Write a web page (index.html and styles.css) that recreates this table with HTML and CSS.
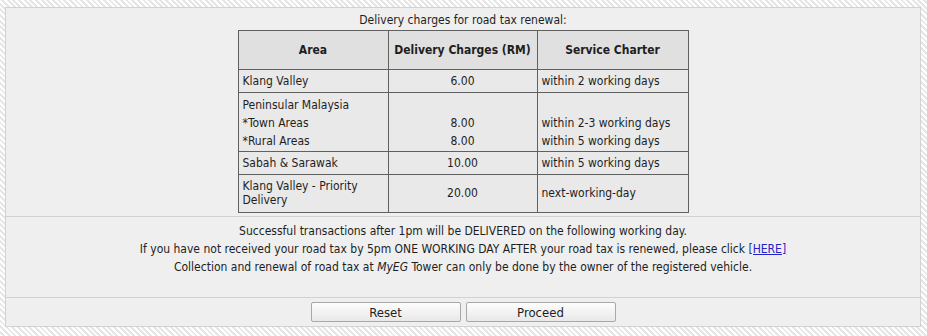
FILE: index.html
```html
<!DOCTYPE html>
<html>
<head>
<meta charset="utf-8">
<link rel="stylesheet" href="styles.css">
</head>
<body>
<div class="panel">
  <div class="charges">
    <div class="caption">Delivery charges for road tax renewal:</div>
    <table class="rates">
      <thead>
        <tr>
          <th class="c-area">Area</th>
          <th class="c-fee">Delivery Charges (RM)</th>
          <th class="c-sla">Service Charter</th>
        </tr>
      </thead>
      <tbody>
        <tr>
          <td>Klang Valley</td>
          <td class="num">6.00</td>
          <td>within 2 working days</td>
        </tr>
        <tr class="multi">
          <td>Peninsular Malaysia<br>*Town Areas<br>*Rural Areas</td>
          <td class="num">&nbsp;<br>8.00<br>8.00</td>
          <td>&nbsp;<br>within 2-3 working days<br>within 5 working days</td>
        </tr>
        <tr>
          <td>Sabah &amp; Sarawak</td>
          <td class="num">10.00</td>
          <td>within 5 working days</td>
        </tr>
        <tr class="last">
          <td>Klang Valley - Priority Delivery</td>
          <td class="num">20.00</td>
          <td>next-working-day</td>
        </tr>
      </tbody>
    </table>
  </div>
  <div class="notes">
    <p>Successful transactions after 1pm will be DELIVERED on the following working day.</p>
    <p>If you have not received your road tax by 5pm ONE WORKING DAY AFTER your road tax is renewed, please click <a href="#">[HERE]</a></p>
    <p>Collection and renewal of road tax at <i>MyEG</i> Tower can only be done by the owner of the registered vehicle.</p>
  </div>
  <div class="actions">
    <button class="btn" type="button">Reset</button>
    <button class="btn" type="button">Proceed</button>
  </div>
</div>
</body>
</html>
```
FILE: styles.css
```css
html, body {
  margin: 0;
  padding: 0;
}
body {
  padding: 7px 6px 9px 5px;
  font-family: Tahoma, "DejaVu Sans Condensed", "DejaVu Sans", sans-serif;
  font-size: 12px;
  line-height: 14px;
  color: #1e1e1e;
  background: repeating-linear-gradient(45deg, #ffffff 0, #ffffff 2px, #e6e6e6 2px, #e6e6e6 4px);
}
.panel {
  border: 1px solid #d2d2d2;
  background: #efefef;
}
.charges {
  padding: 5px 0 3px;
  display: flex;
  flex-direction: column;
  align-items: center;
}
.caption {
  margin-bottom: 3px;
}
.rates {
  border-collapse: collapse;
  border: 1px solid #606060;
  width: 451px;
  table-layout: fixed;
}
.rates th, .rates td {
  border: 1px solid #606060;
  padding: 4px 4px;
  vertical-align: middle;
  text-align: left;
  background: #e9e9e9;
}
.rates th {
  background: #e0e0e0;
  font-weight: bold;
  text-align: center;
  padding: 12px 4px;
}
.c-area { width: 141px; }
.c-fee { width: 140px; }
.c-sla { width: 142px; }
.rates td.num {
  text-align: center;
}
.rates tr.multi td {
  line-height: 18px;
  padding-top: 3px;
  padding-bottom: 1px;
}
.rates tr.last td {
  padding-bottom: 5px;
}
.notes {
  border-top: 1px solid #d2d2d2;
  padding: 5px 0 21px;
  text-align: center;
  line-height: 18px;
}
.notes p {
  margin: 0;
}
.notes a {
  color: #2222cc;
  text-decoration: underline;
}
.actions {
  border-top: 1px solid #d2d2d2;
  padding: 4px 0 4px;
  display: flex;
  justify-content: center;
  gap: 5px;
}
.btn {
  width: 150px;
  height: 20px;
  padding: 0;
  margin: 0;
  font-family: inherit;
  font-size: 13px;
  color: #1e1e1e;
  border: 1px solid #a8a8a8;
  border-radius: 2px;
  background: linear-gradient(#fdfdfd, #e8e8e8);
}
```
